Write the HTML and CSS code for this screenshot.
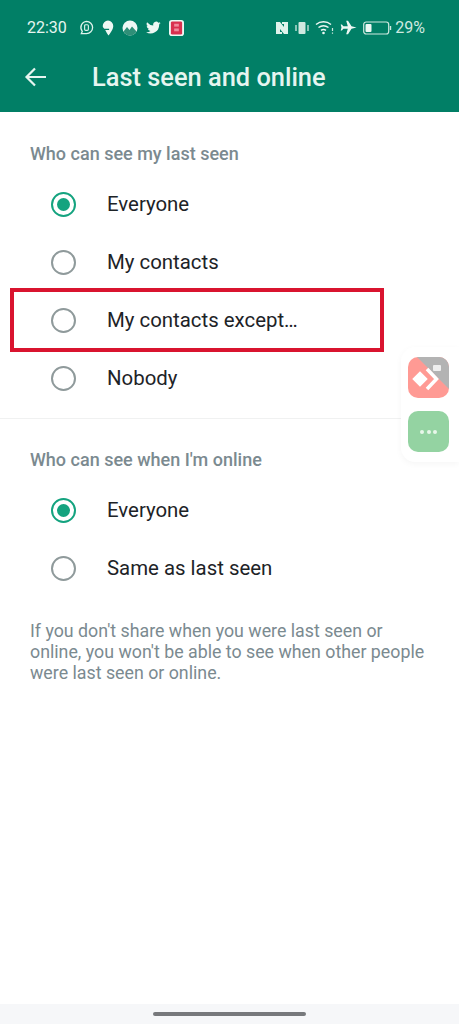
FILE: index.html
```html
<!DOCTYPE html>
<html lang="en">
<head>
    <meta charset="UTF-8">
    <meta name="viewport" content="width=device-width, initial-scale=1.0">
    <title>Last seen and online</title>
    <link rel="stylesheet" href="styles.css">
</head>
<body>
    <div class="header">
        <div class="status">
            <span class="time">22:30</span>
            <div class="status-left">
                <svg width="15" height="15" viewBox="0 0 16 16"><path d="M8 1.500a6.500 6.500 0 0 1 0 13H2.500l1-2.400A6.500 6.500 0 0 1 8 1.500z" fill="none" stroke="#dff3ec" stroke-width="1.400"/><rect x="6" y="5" width="4" height="6" rx="1.200" fill="none" stroke="#dff3ec" stroke-width="1.200"/></svg>
                <svg width="12" height="16" viewBox="0 0 13 17"><path d="M6.500 0.500a5.700 5.700 0 0 1 5.700 5.700c0 3.600-3.500 8.300-5.200 10.300C5.800 15 4.600 13 3.500 10.600h4.200V9.200H2.500C1.500 8.200.8 7.200.8 6.200A5.700 5.700 0 0 1 6.500.5z" fill="#eef8f4"/></svg>
                <svg width="16" height="16" viewBox="0 0 16 16"><circle cx="8" cy="8" r="7.500" fill="#eef8f4"/><path d="M1.500 11.500 5 7l2.500 3L10 6.500l4.500 5A7.500 7.500 0 0 1 8 15.500a7.500 7.500 0 0 1-6.500-4z" fill="#2f8f78"/></svg>
                <svg width="15" height="13" viewBox="0 0 24 20"><path d="M23.500 2.800a9.500 9.500 0 0 1-2.800.8A4.800 4.800 0 0 0 22.800 1a9.600 9.600 0 0 1-3 1.200 4.800 4.800 0 0 0-8.200 4.400A13.600 13.600 0 0 1 1.700 1.500a4.800 4.800 0 0 0 1.500 6.400 4.700 4.700 0 0 1-2.200-.6 4.800 4.800 0 0 0 3.900 4.700 4.800 4.800 0 0 1-2.200.1 4.800 4.800 0 0 0 4.500 3.300A9.600 9.600 0 0 1 0 17.400 13.600 13.600 0 0 0 21 5.300a9.700 9.700 0 0 0 2.500-2.500z" fill="#eef8f4"/></svg>
                <svg width="15" height="16" viewBox="0 0 16 17"><rect width="16" height="17" rx="3" fill="#eef8f4"/><rect x="2" y="1.500" width="12" height="14" rx="1.500" fill="#d9304f"/><rect x="5.500" y="4" width="5" height="3" fill="#f08a9c"/><rect x="5.500" y="9" width="5" height="3" fill="#f08a9c"/></svg>
            </div>
            <div class="status-right">
                <svg width="14" height="14" viewBox="0 0 14 14"><path d="M1 1h4l4 5V3H7V1h6v12H9L5 8v3h2v2H1z" fill="#dff3ec"/></svg>
                <svg width="14" height="14" viewBox="0 0 14 14"><rect x="3.500" y="1" width="7" height="12" rx="1" fill="#cfe9e0"/><path d="M1 4v6M13 4v6" stroke="#cfe9e0" stroke-width="1.300"/></svg>
                <svg width="19" height="15" viewBox="0 0 19 15"><path d="M1 4.500a12 12 0 0 1 15 0M3.500 7.500a8.500 8.500 0 0 1 10 0M6 10.300a4.500 4.500 0 0 1 5 0" fill="none" stroke="#eef8f4" stroke-width="1.500"/><circle cx="8.500" cy="13" r="1.300" fill="#eef8f4"/><path d="M17.500 8v3M17.500 12.500v1.200" stroke="#cfe9e0" stroke-width="1.200"/></svg>
                <svg width="17" height="15" viewBox="0 0 17 15"><path d="M16.500 7.500 11.500 6.300 8 .8H6.200l1.600 5.400H3.400L1.900 4.500H.7l.8 3-.8 3h1.200l1.500-1.700h4.400l-1.600 5.400H8l3.500-5.500z" fill="#eef8f4"/></svg>
                <svg width="29" height="14" viewBox="0 0 29 14"><rect x=".7" y="1" width="25" height="12" rx="2.500" fill="none" stroke="#cfe9e0" stroke-width="1.200"/><rect x="2.500" y="3" width="6" height="8" rx="1" fill="#eef8f4"/><path d="M27.500 5v4" stroke="#cfe9e0" stroke-width="1.400"/></svg>
                <span class="percent">29%</span>
            </div>
        </div>
        <div class="toolbar">
            <svg class="back" width="24" height="20" viewBox="0 0 24 20"><path d="M22 10H3M11 1.500 2.500 10 11 18.500" fill="none" stroke="#e6f5f0" stroke-width="2.200"/></svg>
            <h1>Last seen and online</h1>
        </div>
    </div>

    <div class="section section-first">
        <h2>Who can see my last seen</h2>
        <div class="row"><span class="radio checked"></span><span class="label">Everyone</span></div>
        <div class="row"><span class="radio"></span><span class="label">My contacts</span></div>
        <div class="row"><span class="radio"></span><span class="label">My contacts except…</span></div>
        <div class="row"><span class="radio"></span><span class="label">Nobody</span></div>
    </div>

    <div class="section section-second">
        <h2>Who can see when I'm online</h2>
        <div class="row"><span class="radio checked"></span><span class="label">Everyone</span></div>
        <div class="row"><span class="radio"></span><span class="label">Same as last seen</span></div>
        <p class="note">If you don't share when you were last seen or online, you won't be able to see when other people were last seen or online.</p>
    </div>

    <div class="highlight"></div>

    <div class="float-panel">
        <div class="float-btn btn-red">
            <svg width="41" height="41" viewBox="0 0 41 41"><path d="M41 32V7a7 7 0 0 0-7-7H9z" fill="#b3b3b3"/><rect x="6.500" y="16.500" width="11" height="11" transform="rotate(45 12 22)" fill="#fff"/><path d="M19 12l9.500 10L19 32" fill="none" stroke="#fff" stroke-width="3.500"/><rect x="25" y="8" width="8" height="6" rx="1" fill="#eee"/></svg>
        </div>
        <div class="float-btn btn-green"><span></span><span></span><span></span></div>
    </div>

    <div class="nav-bar"><div class="handle"></div></div>
</body>
</html>
```

FILE: styles.css
```css
html, body {
    height: 1024px;
}
body {
    font-family: Roboto, "Noto Sans", sans-serif;
    background-color: #ffffff;
    margin: 0;
    position: relative;
    display: flex;
    flex-direction: column;
    overflow: hidden;
}
.header {
    height: 112px;
    flex: none;
    background-color: #017f66;
    color: #e6f5f0;
}
.status {
    height: 56px;
    display: flex;
    align-items: center;
    padding: 0 34px 1px 27px;
    box-sizing: border-box;
}
.time {
    font-size: 16px;
    margin-right: 12px;
}
.status-left {
    display: flex;
    align-items: center;
    gap: 8px;
}
.status-right {
    margin-left: auto;
    display: flex;
    align-items: center;
    gap: 6px;
}
.percent {
    font-size: 16px;
    margin-left: -3px;
    color: #cfe9e0;
}
.toolbar {
    height: 42px;
    display: flex;
    align-items: center;
    padding-left: 24px;
}
.back {
    margin-right: 44px;
}
h1 {
    font-size: 25.4px;
    font-weight: 500;
    margin: 0;
}
.section-first {
    height: 307px;
    padding-top: 27px;
    box-sizing: border-box;
    border-bottom: 1px solid #f0f1f1;
}
.section-second {
    padding-top: 26px;
}
h2 {
    font-size: 18px;
    font-weight: 500;
    color: #7b8a90;
    margin: 0 0 7px 30px;
    height: 29px;
    display: flex;
    align-items: center;
}
.row {
    height: 58px;
    display: flex;
    align-items: center;
    padding-left: 51px;
}
.radio {
    width: 21px;
    height: 21px;
    border: 2px solid #8f9a9b;
    border-radius: 50%;
    margin-right: 31px;
    position: relative;
    flex: none;
}
.radio.checked {
    border-color: #14a37f;
}
.radio.checked::after {
    content: "";
    position: absolute;
    top: 4px;
    left: 4px;
    width: 13px;
    height: 13px;
    border-radius: 50%;
    background: #14a37f;
}
.label {
    font-size: 20.4px;
    color: #1d2327;
}
.note {
    font-size: 17.8px;
    line-height: 21px;
    color: #7b8a90;
    margin: 23px 28px 0 30px;
}
.highlight {
    position: absolute;
    left: 10px;
    top: 288px;
    width: 374px;
    height: 64px;
    box-sizing: border-box;
    border: 4px solid #d9142f;
}
.float-panel {
    position: absolute;
    right: 0;
    top: 347px;
    width: 58px;
    height: 115px;
    padding: 10px 0 0 7px;
    box-sizing: border-box;
    background: #fff;
    border-radius: 14px 0 0 14px;
    box-shadow: 0 2px 6px rgba(0, 0, 0, 0.04);
    display: flex;
    flex-direction: column;
    gap: 13px;
}
.float-btn {
    width: 41px;
    height: 41px;
    border-radius: 10px;
    overflow: hidden;
}
.btn-red {
    background: #ff9a94;
}
.btn-green {
    background: #94d3a2;
    display: flex;
    align-items: center;
    justify-content: center;
    gap: 2.5px;
}
.btn-green span {
    width: 4px;
    height: 4px;
    border-radius: 50%;
    background: #e8f7ea;
}
.nav-bar {
    margin-top: auto;
    height: 20px;
    flex: none;
    background: #f6f7f9;
    display: flex;
    justify-content: center;
    padding-top: 8px;
    box-sizing: border-box;
}
.handle {
    width: 153px;
    height: 4px;
    border-radius: 2px;
    background: #77797c;
}
```
